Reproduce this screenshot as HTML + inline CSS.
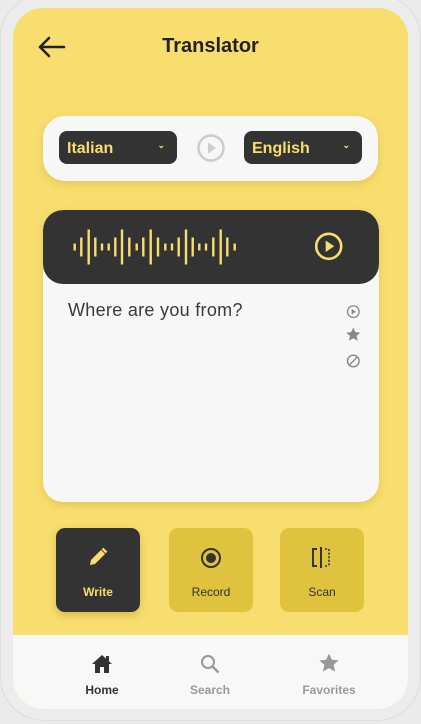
<!DOCTYPE html>
<html><head><meta charset="utf-8"><style>
*{margin:0;padding:0;box-sizing:border-box}
body{width:421px;height:724px;background:#ebebeb;font-family:"Liberation Sans",sans-serif;position:relative;overflow:hidden}
.frame{position:absolute;left:0;top:-6px;width:421px;height:727px;border:1px solid #ddd;border-radius:44px;background:#ececec}
.screen{position:absolute;left:13px;top:8px;width:395px;height:701px;border-radius:30px;background:#f8de6e;overflow:hidden}
.abs{position:absolute}
.title{left:0;width:421px;top:35px;text-align:center;font-weight:bold;font-size:20px;color:#222}
.lang{left:43px;top:116px;width:335px;height:65px;background:#f7f7f7;border-radius:22px;box-shadow:0 3px 8px rgba(180,150,40,.3)}
.dd{top:131px;width:118px;height:33px;background:#333;border-radius:8px;color:#f8de6e;font-weight:bold;font-size:16px;padding:9px 0 0 8px}
.dd span{position:absolute;right:12px;top:9px;font-size:9px}
.card{left:43px;top:210px;width:336px;height:292px;background:#f7f7f7;border-radius:20px;overflow:hidden;box-shadow:0 3px 8px rgba(180,150,40,.3)}
.head{left:0;top:0;width:336px;height:74px;background:#333;border-radius:20px}
.btn{top:528px;width:84px;height:84px;border-radius:9px;background:#dfc33f;text-align:center;font-size:12px;color:#333}
.btn .l{position:absolute;left:0;width:100%;top:57px}
.nav{left:13px;top:635px;width:395px;height:74px;background:#f8f8f8;border-radius:0 0 30px 30px}
.nl{top:683px;font-size:12px;font-weight:bold;text-align:center;width:100px}
</style></head><body>
<div class="frame"></div>
<div class="screen"></div>
<svg class="abs" style="left:37px;top:36px" width="30" height="22" viewBox="0 0 30 22"><path d="M27 11H3M12 2L3 11l9 9" stroke="#222" stroke-width="2.6" fill="none" stroke-linecap="round" stroke-linejoin="round"/></svg>
<div class="abs title">Translator</div>
<div class="abs lang"></div>
<div class="abs dd" style="left:59px">Italian<span>⌄</span></div>
<div class="abs dd" style="left:244px">English<span>⌄</span></div>
<svg class="abs" style="left:197px;top:134px" width="28" height="28"><circle cx="14" cy="14" r="12.5" stroke="#ccc" stroke-width="2.5" fill="none"/><path d="M11 8.5v11l8-5.5z" fill="#ccc"/></svg>
<div class="abs card"><div class="abs head"></div>
<div class="abs" style="left:25px;top:90px;font-size:18px;color:#3a3a3a;letter-spacing:.3px">Where are you from?</div>
</div>
<svg class="abs" style="left:0;top:0" width="421" height="400">
<g fill="#f8de6e">
<rect x="73.5" y="243.5" width="2.4" height="7"/><rect x="80.1" y="237.5" width="2.4" height="19"/><rect x="87.5" y="229.5" width="2.4" height="35"/><rect x="94.1" y="237.5" width="2.4" height="19"/><rect x="100.8" y="243.5" width="2.4" height="7"/><rect x="107.5" y="243.5" width="2.4" height="7"/><rect x="114.1" y="237.5" width="2.4" height="19"/><rect x="120.8" y="229.5" width="2.4" height="35"/><rect x="128.1" y="237.5" width="2.4" height="19"/><rect x="135.5" y="243.5" width="2.4" height="7"/><rect x="142.1" y="237.5" width="2.4" height="19"/><rect x="149.5" y="229.5" width="2.4" height="35"/><rect x="156.8" y="237.5" width="2.4" height="19"/><rect x="164.1" y="243.5" width="2.4" height="7"/><rect x="170.8" y="243.5" width="2.4" height="7"/><rect x="177.5" y="237.5" width="2.4" height="19"/><rect x="184.8" y="229.5" width="2.4" height="35"/><rect x="191.5" y="237.5" width="2.4" height="19"/><rect x="198.1" y="243.5" width="2.4" height="7"/><rect x="204.8" y="243.5" width="2.4" height="7"/><rect x="212.1" y="237.5" width="2.4" height="19"/><rect x="219.5" y="229.5" width="2.4" height="35"/><rect x="226.1" y="237.5" width="2.4" height="19"/><rect x="233.5" y="243.5" width="2.4" height="7"/>
</g>
<circle cx="328.7" cy="246.3" r="12.5" stroke="#f8de6e" stroke-width="2.6" fill="none"/><path d="M325.7 240.5v11.5l8.5-5.8z" fill="#f8de6e"/>
<circle cx="353.3" cy="311.7" r="5.8" stroke="#888" stroke-width="1.3" fill="none"/><path d="M351.6 308.8v5.8l4.3-2.9z" fill="#888"/>
<path d="M353.3 327.5l2.1 4.6 5 .5-3.8 3.3 1.1 4.9-4.4-2.6-4.4 2.6 1.1-4.9-3.8-3.3 5-.5z" fill="#888"/>
<circle cx="353.3" cy="361" r="5.8" stroke="#888" stroke-width="1.4" fill="none"/><path d="M349.3 365l8-8" stroke="#888" stroke-width="1.4"/>
</svg>
<div class="abs btn" style="left:56px;background:#333;color:#f8de6e;font-weight:bold;box-shadow:0 3px 8px rgba(150,120,20,.35)">
<svg class="abs" style="left:31px;top:18px" width="22" height="22"><path d="M3 19l1-5L14 4l4 4L8 18z" fill="#f8de6e"/><path d="M15.5 2.5l4 4" stroke="#f8de6e" stroke-width="2.5"/></svg><div class="l">Write</div></div>
<div class="abs btn" style="left:169px">
<svg class="abs" style="left:31px;top:19px" width="22" height="22"><circle cx="11" cy="11" r="9" stroke="#333" stroke-width="2" fill="none"/><circle cx="11" cy="11" r="5" fill="#333"/></svg><div class="l">Record</div></div>
<div class="abs btn" style="left:280px">
<svg class="abs" style="left:31px;top:18px" width="22" height="24"><path d="M6 3H2v17h4" stroke="#333" stroke-width="2" fill="none"/><path d="M10 1v21" stroke="#333" stroke-width="2"/><path d="M14 3h3M18 3v17M14 20h3" stroke="#333" stroke-width="1.6" stroke-dasharray="2 1.6" fill="none"/></svg><div class="l">Scan</div></div>
<div class="abs nav"></div>
<svg class="abs" style="left:91px;top:653px" width="22" height="22"><path d="M11 2L1 11h3v9h5v-6h4v6h5v-9h3z" fill="#333"/><rect x="15" y="3" width="3" height="5" fill="#333"/></svg>
<svg class="abs" style="left:199px;top:653px" width="22" height="22"><circle cx="9" cy="9" r="6" stroke="#999" stroke-width="2" fill="none"/><path d="M13.5 13.5l6 6" stroke="#999" stroke-width="2.4"/></svg>
<svg class="abs" style="left:318px;top:652px" width="22" height="22"><path d="M11 1.5l2.9 6.2 6.8.7-5.1 4.5 1.5 6.7-6.1-3.5-6.1 3.5 1.5-6.7-5.1-4.5 6.8-.7z" fill="#999"/></svg>
<div class="abs nl" style="left:52px;color:#333">Home</div>
<div class="abs nl" style="left:160px;color:#999">Search</div>
<div class="abs nl" style="left:279px;color:#999">Favorites</div>
</body></html>
